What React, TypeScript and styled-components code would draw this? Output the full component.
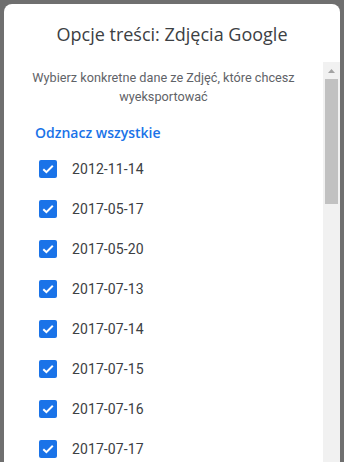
import React from "react";
import styled, { createGlobalStyle } from "styled-components";

const Global = createGlobalStyle`
  html, body { margin: 0; padding: 0; }
  body { background: #707070; font-family: Roboto, "Noto Sans", Arial, sans-serif; overflow: hidden; }
`;

const Backdrop = styled.div`
  width: 344px;
  height: 462px;
  box-sizing: border-box;
  padding: 4px 4px 0 4px;
  background: #6f6f6f;
  overflow: hidden;
  display: flex;
`;

const Dialog = styled.div`
  flex: 1;
  background: #ffffff;
  border-radius: 8px 8px 0 0;
  display: flex;
  flex-direction: column;
  overflow: hidden;
`;

const Header = styled.div`
  height: 58px;
  display: flex;
  align-items: center;
  justify-content: center;
  padding-top: 2px;
  box-sizing: border-box;
`;

const Title = styled.h2`
  margin: 0;
  font-family: "Open Sans", Roboto, sans-serif;
  font-weight: 400;
  font-size: 18px;
  color: #3c4043;
`;

const Body = styled.div`
  flex: 1;
  display: flex;
  min-height: 0;
`;

const Content = styled.div`
  flex: 1;
  padding: 6px 0 0 32px;
  display: flex;
  flex-direction: column;
`;

const Description = styled.p`
  margin: 0 0 0 -32px;
  text-align: center;
  font-size: 12.7px;
  line-height: 19px;
  color: #5f6368;
  padding: 0 18px;
`;

const Deselect = styled.button`
  align-self: flex-start;
  margin: 17px 0 0 -1px;
  padding: 0;
  border: none;
  background: none;
  font-family: "Open Sans", Roboto, sans-serif;
  font-weight: 600;
  font-size: 14px;
  line-height: 20px;
  color: #1a73e8;
  cursor: pointer;
`;

const List = styled.ul`
  list-style: none;
  margin: 6px 0 0 0;
  padding: 0;
  display: flex;
  flex-direction: column;
`;

const Item = styled.li`
  height: 40px;
  display: flex;
  align-items: center;
  gap: 15px;
  padding-left: 3px;
`;

const Box = styled.span`
  width: 18px;
  height: 18px;
  border-radius: 2px;
  background: #1a73e8;
  display: flex;
  align-items: center;
  justify-content: center;
  flex-shrink: 0;
`;

const Label = styled.span`
  font-size: 14px;
  color: #3c4043;
  letter-spacing: 0.1px;
`;

const Scrollbar = styled.div`
  width: 17px;
  background: #f1f1f1;
  display: flex;
  flex-direction: column;
  align-items: center;
`;

const ArrowButton = styled.div`
  height: 17px;
  width: 17px;
  display: flex;
  align-items: center;
  justify-content: center;
`;

const Thumb = styled.div`
  width: 13px;
  height: 125px;
  background: #c1c1c1;
`;

const dates = [
  "2012-11-14",
  "2017-05-17",
  "2017-05-20",
  "2017-07-13",
  "2017-07-14",
  "2017-07-15",
  "2017-07-16",
  "2017-07-17",
];

const Check = () => (
  <svg width="14" height="14" viewBox="0 0 14 14" aria-hidden>
    <path d="M2.3 7.2 L5.4 10.2 L11.8 3.8" fill="none" stroke="#fff" strokeWidth="2" />
  </svg>
);

export default function App() {
  return (
    <>
      <Global />
      <Backdrop>
        <Dialog>
          <Header>
            <Title>Opcje treści: Zdjęcia Google</Title>
          </Header>
          <Body>
            <Content>
              <Description>
                Wybierz konkretne dane ze Zdjęć, które chcesz wyeksportować
              </Description>
              <Deselect>Odznacz wszystkie</Deselect>
              <List>
                {dates.map((d) => (
                  <Item key={d}>
                    <Box>
                      <Check />
                    </Box>
                    <Label>{d}</Label>
                  </Item>
                ))}
              </List>
            </Content>
            <Scrollbar>
              <ArrowButton>
                <svg width="7" height="4" viewBox="0 0 7 4" aria-hidden>
                  <path d="M0 4 L3.5 0 L7 4 Z" fill="#a3a3a3" />
                </svg>
              </ArrowButton>
              <Thumb />
            </Scrollbar>
          </Body>
        </Dialog>
      </Backdrop>
    </>
  );
}
